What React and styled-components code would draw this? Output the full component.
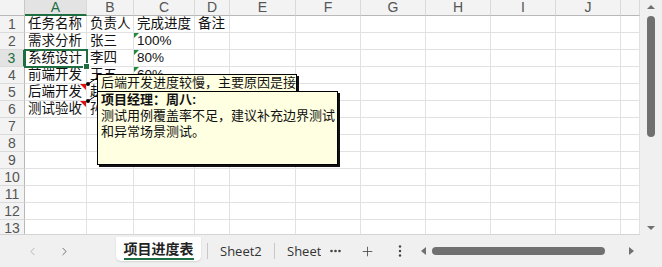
import React from 'react';
import styled, { createGlobalStyle } from 'styled-components';
import { ChevronLeft, ChevronRight, Plus } from 'lucide-react';

const GlobalStyle = createGlobalStyle`
  body {
    margin: 0;
    background: #f0f0f0;
    font-family: "Liberation Sans", "Noto Sans CJK SC", sans-serif;
  }
`;

const GREEN = '#1e6e42';
const WIDTHS = [25, 62, 47, 61, 35, 66, 65, 65, 65, 65, 65, 19];
const LETTERS = ['A', 'B', 'C', 'D', 'E', 'F', 'G', 'H', 'I', 'J', ''];

const Window = styled.div`
  width: 662px;
  height: 267px;
  display: grid;
  grid-template-columns: 640px 22px;
  grid-template-rows: 235px 32px;
  background: #f0f0f0;
  overflow: hidden;
`;

const Sheet = styled.div`
  position: relative;
  overflow: hidden;
  background: #fff;
  border-bottom: 1px solid #d4d4d4;
  box-sizing: border-box;
`;

const Grid = styled.div`
  display: grid;
  grid-template-columns: ${WIDTHS.map(w => w + 'px').join(' ')};
  grid-template-rows: 16px;
  grid-auto-rows: 17px;
`;

const Corner = styled.div`
  background: #f3f3f3;
  border-right: 1px solid #c8c8c8;
  border-bottom: 1px solid #b8b8b8;
  box-sizing: border-box;
`;

const ColHead = styled.div`
  background: ${p => (p.$active ? '#e3e3e3' : '#f3f3f3')};
  color: ${p => (p.$active ? GREEN : '#555')};
  border-right: 1px solid #dadada;
  border-bottom: ${p => (p.$active ? `2px solid ${GREEN}` : '1px solid #b8b8b8')};
  box-sizing: border-box;
  font-size: 14px;
  line-height: 15px;
  text-align: center;
`;

const RowHead = styled.div`
  background: ${p => (p.$active ? '#e3e3e3' : '#f3f3f3')};
  color: ${p => (p.$active ? GREEN : '#555')};
  border-right: ${p => (p.$active ? `2px solid ${GREEN}` : '1px solid #b8b8b8')};
  border-bottom: 1px solid #dadada;
  box-sizing: border-box;
  font-size: 14px;
  line-height: 16px;
  text-align: center;
`;

const Cell = styled.div`
  position: relative;
  border-right: 1px solid #e1e1e1;
  border-bottom: 1px solid #e1e1e1;
  box-sizing: border-box;
  font-size: 13.5px;
  line-height: 16px;
  padding-left: 3px;
  color: #111;
  white-space: nowrap;
  z-index: ${p => (p.$selected ? 2 : 0)};
  outline: ${p => (p.$selected ? `2px solid ${GREEN}` : 'none')};
  outline-offset: -1px;

  &::before {
    content: '';
    display: ${p => (p.$flag ? 'block' : 'none')};
    position: absolute;
    left: 0;
    top: 0;
    border-top: 5px solid #1f8a3c;
    border-right: 5px solid transparent;
  }

  &::after {
    content: '';
    display: ${p => (p.$note || p.$selected ? 'block' : 'none')};
    position: absolute;
    ${p =>
      p.$selected
        ? `right: -4px; bottom: -4px; width: 5px; height: 5px; background: ${GREEN}; border: 1px solid #fff;`
        : 'right: 0; top: 0; border-top: 6px solid #e01010; border-left: 6px solid transparent;'}
  }
`;

const Note = styled.div`
  position: absolute;
  left: 97px;
  top: ${p => p.$top}px;
  width: ${p => p.$width}px;
  height: ${p => p.$height}px;
  background: #ffffe1;
  border: 1px solid #000;
  box-shadow: 2px 2px 0 #111;
  box-sizing: border-box;
  padding: 0 3px;
  font-size: 13px;
  line-height: 16px;
  color: #111;
  white-space: nowrap;
  overflow: hidden;
  z-index: 3;
`;

const NoteAuthor = styled.div`
  font-weight: bold;
`;

const Leader = styled.svg`
  position: absolute;
  left: 82px;
  top: 72px;
  z-index: 4;
`;

const VScroll = styled.div`
  display: flex;
  flex-direction: column;
  align-items: center;
  padding: 5px 0;
  box-sizing: border-box;
  background: #f0f0f0;
`;

const Arrow = styled.div`
  width: 0;
  height: 0;
  border-left: ${p => p.$size}px solid transparent;
  border-right: ${p => p.$size}px solid transparent;
  ${p => (p.$dir === 'up' ? 'border-bottom' : 'border-top')}: ${p => p.$size}px solid #707070;
`;

const VThumb = styled.div`
  width: 8px;
  height: 121px;
  margin-top: 7px;
  border-radius: 4px;
  background: #707070;
`;

const Spacer = styled.div`
  flex: 1;
`;

const TabBar = styled.div`
  grid-column: 1 / -1;
  display: flex;
  align-items: center;
  padding-left: 16px;
  background: #f0f0f0;
  font-family: "Open Sans", "Noto Sans CJK SC", sans-serif;
`;

const NavButton = styled.div`
  width: 32px;
  display: flex;
  justify-content: center;
  color: ${p => (p.$disabled ? '#a8a8a8' : '#555')};
`;

const ActiveTab = styled.div`
  align-self: flex-start;
  margin: 2px 0 0 36px;
  width: 85px;
  height: 24px;
  background: #fff;
  border-radius: 0 0 5px 5px;
  box-shadow: 0 1px 2px rgba(0, 0, 0, 0.12);
  display: flex;
  justify-content: center;
  padding-top: 3px;
  box-sizing: border-box;
`;

const ActiveLabel = styled.span`
  font-family: "Noto Sans CJK SC", sans-serif;
  font-size: 14px;
  font-weight: bold;
  line-height: 16px;
  color: #222;
  border-bottom: 2px solid ${GREEN};
  padding-bottom: 1px;
  height: 17px;
`;

const Divider = styled.div`
  width: 1px;
  height: 16px;
  background: #c8c8c8;
  margin-left: ${p => p.$ml}px;
`;

const Tab = styled.div`
  margin-left: 12px;
  width: ${p => p.$width}px;
  overflow: hidden;
  white-space: nowrap;
  font-size: 13px;
  color: #333;
`;

const IconBox = styled.div`
  display: flex;
  align-items: center;
  justify-content: center;
  margin-left: ${p => p.$ml}px;
  color: #444;
`;

const HScroll = styled.div`
  display: flex;
  align-items: center;
  margin-left: 19px;
`;

const SideArrow = styled.div`
  width: 0;
  height: 0;
  border-top: 4px solid transparent;
  border-bottom: 4px solid transparent;
  ${p => (p.$dir === 'left' ? 'border-right' : 'border-left')}: 5px solid #707070;
`;

const HThumb = styled.div`
  width: 173px;
  height: 8px;
  margin: 0 24px 0 6px;
  border-radius: 4px;
  background: #707070;
`;

const rows = [
  [{ t: '任务名称' }, { t: '负责人' }, { t: '完成进度' }, { t: '备注' }],
  [{ t: '需求分析' }, { t: '张三' }, { t: '100%', flag: true }],
  [{ t: '系统设计', selected: true }, { t: '李四' }, { t: '80%', flag: true }],
  [{ t: '前端开发' }, { t: '王五' }, { t: '60%', flag: true }],
  [{ t: '后端开发', note: true }, { t: '赵六' }],
  [{ t: '测试验收', note: true }, { t: '孙七' }],
  [], [], [], [], [], [], []
];

const App = () => {
  const renderRow = (row, r) => {
    return [
      <RowHead key={'h' + r} $active={r === 2}>{r + 1}</RowHead>,
      ...LETTERS.map((_, c) => {
        const cell = row[c] || {};
        return (
          <Cell
            key={r + '-' + c}
            $selected={cell.selected}
            $flag={cell.flag}
            $note={cell.note}
          >
            {cell.t}
          </Cell>
        );
      })
    ];
  };

  return (
    <>
      <GlobalStyle />
      <Window>
        <Sheet>
          <Grid>
            <Corner />
            {LETTERS.map((l, i) => (
              <ColHead key={i} $active={l === 'A'}>{l}</ColHead>
            ))}
            {rows.map(renderRow)}
          </Grid>

          <Note $top={74} $width={200} $height={20}>
            后端开发进度较慢，主要原因是接口联调延期
          </Note>
          <Note $top={91} $width={241} $height={74}>
            <NoteAuthor>项目经理：周八:</NoteAuthor>
            测试用例覆盖率不足，建议补充边界测试
            <br />
            和异常场景测试。
          </Note>
          <Leader width='16' height='34' viewBox='0 0 16 34'>
            <line x1='6' y1='12' x2='15' y2='6' stroke='#000' strokeWidth='1' />
            <circle cx='6' cy='12' r='2' fill='#000' />
            <line x1='6' y1='29' x2='15' y2='23' stroke='#000' strokeWidth='1' />
            <circle cx='6' cy='29' r='2' fill='#000' />
          </Leader>
        </Sheet>

        <VScroll>
          <Arrow $dir='up' $size={4} />
          <VThumb />
          <Spacer />
          <Arrow $dir='down' $size={4} />
        </VScroll>

        <TabBar>
          <NavButton $disabled>
            <ChevronLeft size={13} strokeWidth={1.5} />
          </NavButton>
          <NavButton>
            <ChevronRight size={13} strokeWidth={1.5} />
          </NavButton>
          <ActiveTab>
            <ActiveLabel>项目进度表</ActiveLabel>
          </ActiveTab>
          <Divider $ml={6} />
          <Tab $width={42}>Sheet2</Tab>
          <Divider $ml={12} />
          <Tab $width={34}>Sheet3</Tab>
          <IconBox $ml={9}>
            <svg width='11' height='4' viewBox='0 0 11 4'>
              <circle cx='1.5' cy='2' r='1.3' fill='#444' />
              <circle cx='5.5' cy='2' r='1.3' fill='#444' />
              <circle cx='9.5' cy='2' r='1.3' fill='#444' />
            </svg>
          </IconBox>
          <IconBox $ml={19}>
            <Plus size={15} strokeWidth={1.3} />
          </IconBox>
          <IconBox $ml={23}>
            <svg width='4' height='12' viewBox='0 0 4 12'>
              <circle cx='2' cy='1.5' r='1.2' fill='#444' />
              <circle cx='2' cy='6' r='1.2' fill='#444' />
              <circle cx='2' cy='10.5' r='1.2' fill='#444' />
            </svg>
          </IconBox>
          <HScroll>
            <SideArrow $dir='left' />
            <HThumb />
            <SideArrow $dir='right' />
          </HScroll>
        </TabBar>
      </Window>
    </>
  );
};

export default App;
